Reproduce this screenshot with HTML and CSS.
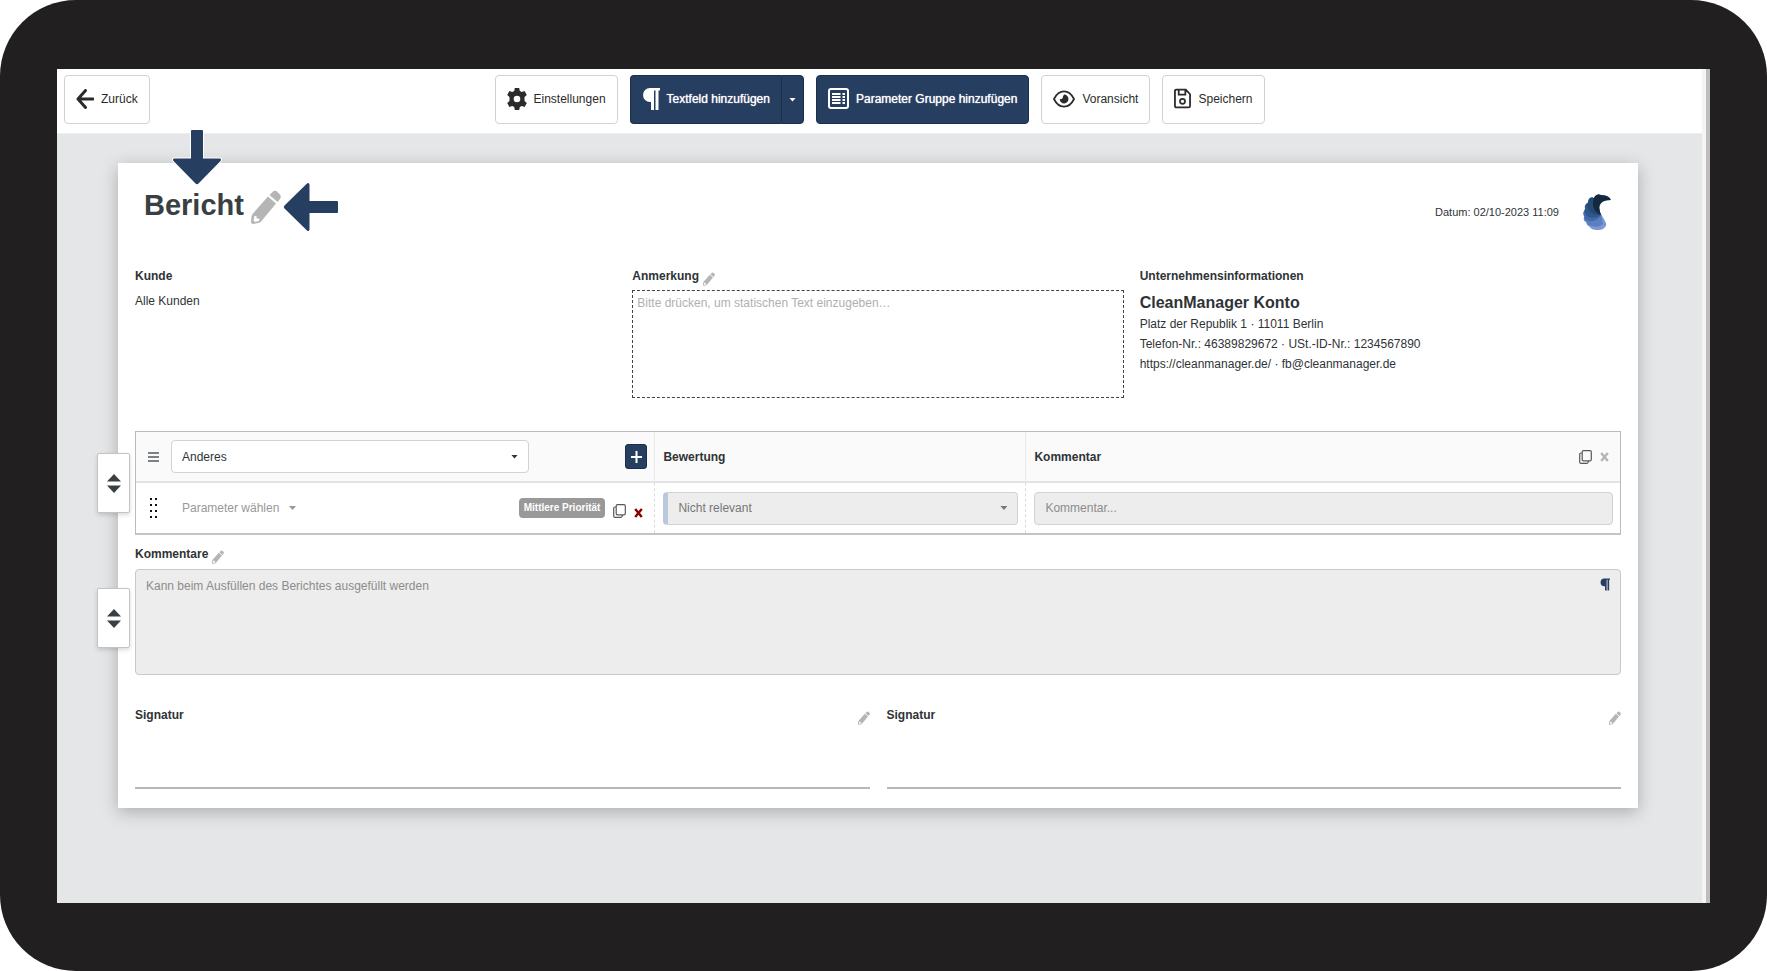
FILE: index.html
```
<!DOCTYPE html>
<html lang="de">
    <head>
        <meta charset="utf-8">
        <title>Bericht</title>
        <link rel="stylesheet" href="styles.css">
    </head>
    <body>
        <!-- shared icons -->
        <svg class="sprite" width="0" height="0" aria-hidden="true">
            <symbol id="pencil" viewBox="0 0 30 34">
                <path d="M21 2.500 Q23.500 -0.500 26.500 2 L28.500 4 Q31 6.500 28.500 9.500 L26.500 12 L18.500 5Z"/>
                <path fill-rule="evenodd" d="M17 6.500 L25 13.500 L10.500 31 Q9.500 32.500 7.500 33 L2 34 Q0 34 0 32 L0.500 26.500 Q0.800 25 2 23.500Z M3.500 26 L2.500 30.500 L4 32 L8 31 L8.500 28.500 L5.500 28.500 L5.500 26Z"/>
            </symbol>
            <symbol id="pilcrow" viewBox="0 0 18 22">
                <path d="M8 0 H18 V2.500 H16.500 V22 H13.500 V2.500 H12 V22 H9 V14 H8 A7 7 0 0 1 8 0Z"/>
            </symbol>
            <symbol id="copy" viewBox="0 0 13 14">
                <path d="M4.500 0.700 H11 Q12.300 0.700 12.300 2 V9.500 Q12.300 10.800 11 10.800 H4.500 Q3.200 10.800 3.200 9.500 V2 Q3.200 0.700 4.500 0.700Z M3.200 3 H2 Q0.700 3 0.700 4.300 V12 Q0.700 13.300 2 13.300 H8 Q9.300 13.300 9.500 10.800" fill="none" stroke="currentColor" stroke-width="1.200"/>
            </symbol>
            <symbol id="cross" viewBox="0 0 9 10">
                <path d="M1.200 1 L7.800 9 M7.800 1 L1.200 9" fill="none" stroke="currentColor" stroke-width="2.400"/>
            </symbol>
            <symbol id="updown" viewBox="0 0 14 19">
                <path d="M7 0 L14 7.500 H0Z M0 11.500 H14 L7 19Z"/>
            </symbol>
        </svg>

        <div class="device">
            <div class="screen">
                <header class="toolbar">
                    <div>
                        <button class="btn" type="button">
                            <svg width="18" height="20" viewBox="0 0 18 20"><path d="M9.500 1.500 L2 10 L9.500 18.500 M2 10 H17" fill="none" stroke="currentColor" stroke-width="3" stroke-linecap="round" stroke-linejoin="round"/></svg>
                            Zurück
                        </button>
                    </div>
                    <div class="toolbar-actions">
                        <button class="btn" type="button">
                            <svg width="20" height="22" viewBox="0 0 20 22"><path fill-rule="evenodd" d="M7.800 0 H12.200 L12.800 3 L14.800 4.100 L17.600 3.100 L19.800 7 L17.500 9 V13 L19.800 15 L17.600 18.900 L14.800 17.900 L12.800 19 L12.200 22 H7.800 L7.200 19 L5.200 17.900 L2.400 18.900 L0.200 15 L2.500 13 V9 L0.200 7 L2.400 3.100 L5.200 4.100 L7.200 3Z M10 7.700 A3.300 3.300 0 1 0 10 14.300 A3.300 3.300 0 1 0 10 7.700Z"/></svg>
                            Einstellungen
                        </button>
                        <div class="btn-group">
                            <button class="btn btn-primary" type="button">
                                <svg width="18" height="22"><use href="#pilcrow"/></svg>
                                Textfeld hinzufügen
                            </button>
                            <button class="btn btn-primary btn-caret" type="button" aria-label="Weitere Optionen"><span class="caret"></span></button>
                        </div>
                        <button class="btn btn-primary" type="button">
                            <svg width="21" height="21" viewBox="0 0 21 21"><rect x="1" y="1" width="19" height="19" rx="2" fill="none" stroke="currentColor" stroke-width="2"/><path d="M4 6 H12.500 M4 9 H12.500 M4 12 H12.500 M4 15 H12.500 M14.500 6 H17 M14.500 9 H17 M14.500 12 H17 M14.500 15 H17" stroke="currentColor" stroke-width="1.800"/></svg>
                            Parameter Gruppe hinzufügen
                        </button>
                        <button class="btn" type="button">
                            <svg width="22" height="18" viewBox="0 0 23 18"><path d="M1 9 Q5 1 11.500 1 Q18 1 22 9 Q18 17 11.500 17 Q5 17 1 9Z" fill="none" stroke="currentColor" stroke-width="1.800" stroke-linejoin="round"/><path d="M11.500 4.400 A4.600 4.600 0 1 1 7 9.200 Q9.300 9.200 10 8.200 Q10.300 6 11.500 4.400Z"/></svg>
                            Voransicht
                        </button>
                        <button class="btn" type="button">
                            <svg width="17" height="21" viewBox="0 0 18 21"><path d="M2.500 1 H12.500 L17 6 V18.500 Q17 20 15.500 20 H2.500 Q1 20 1 18.500 V2.500 Q1 1 2.500 1Z M5 1 V6.500 H12 V1" fill="none" stroke="currentColor" stroke-width="1.900"/><circle cx="9" cy="13.500" r="2.700" fill="none" stroke="currentColor" stroke-width="1.800"/></svg>
                            Speichern
                        </button>
                    </div>
                </header>

                <main class="workspace">
                    <div class="sheet">
                        <div class="sheet-head">
                            <div class="title">
                                <h1>Bericht</h1>
                                <button class="icon-btn pencil" type="button" aria-label="Titel bearbeiten"><svg width="30" height="34"><use href="#pencil"/></svg></button>
                                <svg class="arrow arrow-down" width="50" height="57" viewBox="0 0 50 57"><path d="M20 1 H30 Q31 1 31 2 V29.500 H47.500 Q50 30 48.500 32 L26.500 54.500 Q25 56 23.500 54.500 L1.500 32 Q0 30 2.500 29.500 H19 V2 Q19 1 20 1Z"/></svg>
                                <svg class="arrow arrow-left" width="57" height="50" viewBox="0 0 57 50"><path d="M56 20 V30 Q56 31 55 31 H27.500 V47.500 Q27 50 25 48.500 L2.500 26.500 Q1 25 2.500 23.500 L25 1.500 Q27 0 27.500 2.500 V19 H55 Q56 19 56 20Z"/></svg>
                            </div>
                            <div class="meta">
                                <span>Datum: 02/10-2023 11:09</span>
                                <svg width="28" height="37" viewBox="0 0 28 37">
                                    <path d="M4 28 Q3 31 6 32 Q8 36 14 36 Q20 36.500 22 33 Q24.500 31 22 27 L18 20 L8 22Z" fill="#7b98d3"/>
                                    <path d="M1 23 Q0 27 3 28 Q4 32 9 32 Q16 34 20 30 L18 20 L8 18Z" fill="#5b7fc0"/>
                                    <path d="M2 15 Q-1 19 1 22 Q2 27 7 27 Q14 28 18 21 L12 12Z" fill="#416ba6"/>
                                    <path d="M4 9 Q1 11 2 15 Q1 21 6 23 Q13 25 18 21 L14 9Z" fill="#30568b"/>
                                    <path d="M9 3 Q5 4 5 8 Q3 12 6 16 Q9 21 18 21 Q14 14 18 8Z" fill="#244a74"/>
                                    <path d="M12 2 Q15 -1 18 1 Q26 1 28 6 Q18 6 16.500 12 Q16 16 18 21 Q9 17 10 8 Q10 4 12 2Z" fill="#14283f"/>
                                </svg>
                            </div>
                        </div>

                        <div class="info">
                            <section>
                                <h2>Kunde</h2>
                                <p class="customer">Alle Kunden</p>
                            </section>
                            <section class="note">
                                <div class="label-row">
                                    <label for="note">Anmerkung</label>
                                    <button class="icon-btn pencil" type="button" aria-label="Anmerkung bearbeiten"><svg width="12" height="14"><use href="#pencil"/></svg></button>
                                </div>
                                <textarea id="note" placeholder="Bitte drücken, um statischen Text einzugeben…"></textarea>
                            </section>
                            <section>
                                <h2>Unternehmensinformationen</h2>
                                <h3>CleanManager Konto</h3>
                                <p>Platz der Republik 1 · 11011 Berlin</p>
                                <p>Telefon-Nr.: 46389829672 · USt.-ID-Nr.: 1234567890</p>
                                <p>https://cleanmanager.de/ · fb@cleanmanager.de</p>
                            </section>
                        </div>

                        <section class="block">
                            <button class="handle" type="button" aria-label="Parametergruppe verschieben"><svg width="14" height="19"><use href="#updown"/></svg></button>
                            <table class="params">
                                <thead>
                                    <tr>
                                        <th>
                                            <div class="cell">
                                                <svg class="grip" width="11" height="10" viewBox="0 0 11 10"><path d="M0 1 H11 M0 5 H11 M0 9 H11" stroke="#55595c" stroke-width="1.600"/></svg>
                                                <div class="select group-select">
                                                    <select aria-label="Parametergruppe"><option>Anderes</option></select>
                                                    <span class="caret"></span>
                                                </div>
                                                <button class="add" type="button" aria-label="Parameter hinzufügen"><svg width="11" height="12" viewBox="0 0 11 12"><path d="M5.500 0 V12 M0 6 H11" stroke="currentColor" stroke-width="2"/></svg></button>
                                            </div>
                                        </th>
                                        <th>Bewertung</th>
                                        <th>
                                            <div class="cell">
                                                Kommentar
                                                <span class="cell-tools">
                                                    <button class="icon-btn" type="button" aria-label="Gruppe kopieren"><svg width="13" height="14"><use href="#copy"/></svg></button>
                                                    <button class="icon-btn muted" type="button" aria-label="Gruppe entfernen"><svg width="9" height="10"><use href="#cross"/></svg></button>
                                                </span>
                                            </div>
                                        </th>
                                    </tr>
                                </thead>
                                <tbody>
                                    <tr>
                                        <td>
                                            <div class="cell">
                                                <svg class="grip" width="11" height="20" viewBox="0 0 11 20"><path d="M2 0h2v2h-2z M7 0h2v2h-2z M2 6h2v2h-2z M7 6h2v2h-2z M2 12h2v2h-2z M7 12h2v2h-2z M2 18h2v2h-2z M7 18h2v2h-2z" fill="#111"/></svg>
                                                <div class="select plain-select">
                                                    <select aria-label="Parameter"><option>Parameter wählen</option></select>
                                                    <span class="caret"></span>
                                                </div>
                                                <span class="cell-tools">
                                                    <span class="badge">Mittlere Priorität</span>
                                                    <button class="icon-btn" type="button" aria-label="Parameter kopieren"><svg width="13" height="14"><use href="#copy"/></svg></button>
                                                    <button class="icon-btn danger" type="button" aria-label="Parameter entfernen"><svg width="9" height="10"><use href="#cross"/></svg></button>
                                                </span>
                                            </div>
                                        </td>
                                        <td>
                                            <div class="select rating-select">
                                                <select aria-label="Bewertung"><option>Nicht relevant</option></select>
                                                <span class="caret"></span>
                                            </div>
                                        </td>
                                        <td><input class="comment" type="text" aria-label="Kommentar" placeholder="Kommentar..."></td>
                                    </tr>
                                </tbody>
                            </table>
                        </section>

                        <section class="block comments">
                            <button class="handle handle-text" type="button" aria-label="Textfeld verschieben"><svg width="14" height="19"><use href="#updown"/></svg></button>
                            <div class="label-row">
                                <label for="comments">Kommentare</label>
                                <button class="icon-btn pencil" type="button" aria-label="Kommentare bearbeiten"><svg width="12" height="14"><use href="#pencil"/></svg></button>
                            </div>
                            <div class="comments-box">
                                <textarea id="comments" placeholder="Kann beim Ausfüllen des Berichtes ausgefüllt werden"></textarea>
                                <svg class="mark" width="10" height="13"><use href="#pilcrow"/></svg>
                            </div>
                        </section>

                        <div class="signatures">
                            <section class="signature">
                                <h2>Signatur</h2>
                                <button class="icon-btn pencil" type="button" aria-label="Signatur bearbeiten"><svg width="12" height="14"><use href="#pencil"/></svg></button>
                            </section>
                            <section class="signature">
                                <h2>Signatur</h2>
                                <button class="icon-btn pencil" type="button" aria-label="Signatur bearbeiten"><svg width="12" height="14"><use href="#pencil"/></svg></button>
                            </section>
                        </div>
                    </div>
                </main>
            </div>
        </div>
    </body>
</html>
```
FILE: styles.css
```
* {
    box-sizing: border-box;
}
body {
    margin: 0;
    background: #fff;
    color: #2f3336;
    font: 12px/20px "Liberation Sans", Arial, sans-serif;
}
h1, h2, h3, p {
    margin: 0;
}
h2, label {
    font-size: 12px;
    font-weight: bold;
    line-height: 20px;
}
button, select, input, textarea {
    font: inherit;
    color: inherit;
}
svg {
    display: block;
    flex: none;
    fill: currentColor;
}
.sprite {
    position: absolute;
}

/* tablet frame */
.device {
    display: flex;
    min-height: 100vh;
    padding: 69px 57px 68px;
    background: #221f20;
    border-radius: 76px;
}
.screen {
    flex: 1;
    display: flex;
    flex-direction: column;
    background: #e4e6e8;
    border-right: 4px solid #bdbdbd;
    box-shadow: inset -4px 0 #f4f4f4;
}

/* toolbar */
.toolbar {
    display: grid;
    grid-template-columns: 1fr auto 1fr;
    margin-right: 4px;
    padding: 6px 7px 9px;
    background: #fff;
    border-bottom: 1px solid #eee;
}
.toolbar-actions {
    display: flex;
    gap: 12px;
}
.btn {
    display: flex;
    align-items: center;
    gap: 7px;
    height: 49px;
    padding: 0 11px 2px;
    background: #fff;
    border: 1px solid #d0d2d3;
    border-radius: 4px;
    color: #2b2b2b;
    white-space: nowrap;
}
.btn-primary {
    background: #263e60;
    border-color: #1b2f4d;
    color: #fff;
    text-shadow: 0 0 1px #fff;
}
.btn-group {
    display: flex;
}
.btn-group .btn:first-child {
    border-radius: 4px 0 0 4px;
    border-right: 0;
}
.btn-group .btn-caret {
    padding: 0 7px;
    border-radius: 0 4px 4px 0;
}
.caret {
    width: 7px;
    height: 4px;
    background: currentColor;
    clip-path: polygon(0 0, 100% 0, 50% 100%);
}

/* report sheet */
.workspace {
    padding: 29px 68px 0 61px;
}
.sheet {
    padding: 18px 17px 19px;
    background: #fff;
    box-shadow: 0 4px 16px rgba(0, 0, 0, 0.25);
}
.sheet-head {
    display: flex;
    justify-content: space-between;
    height: 60px;
    margin-bottom: 25px;
    padding-left: 9px;
}
.title {
    position: relative;
    display: flex;
    gap: 7px;
    height: 48px;
    align-items: center;
}
h1 {
    font-size: 29px;
    line-height: 48px;
    color: #3a3f43;
}
.icon-btn {
    padding: 0;
    background: none;
    border: 0;
    color: #55595c;
}
.pencil {
    color: #b5b5b5;
}
.title .pencil {
    padding-top: 4px;
}
.arrow {
    position: absolute;
    fill: #263e60;
    stroke: #fff;
    stroke-width: 2px;
    paint-order: stroke;
    overflow: visible;
}
.arrow-down {
    left: 28px;
    top: -52px;
}
.arrow-left {
    left: 138px;
    top: 1px;
}
.meta {
    display: flex;
    align-items: center;
    gap: 24px;
    padding: 2px 10px 0 0;
    height: 60px;
    font-size: 11px;
}
.info {
    display: grid;
    grid-template-columns: 482fr 492fr 482fr;
    gap: 16px;
    margin-bottom: 33px;
}
.customer {
    padding-top: 5px;
}
.info h3 {
    padding-top: 6px;
    font-size: 16px;
    line-height: 22px;
}
.label-row {
    display: flex;
    align-items: flex-end;
    gap: 4px;
    height: 20px;
}
textarea {
    display: block;
    width: 100%;
    resize: none;
}
.note textarea {
    height: 108px;
    margin-top: 4px;
    padding: 2px 4px;
    background: #fff;
    border: 1px dashed #444;
}
.note textarea::placeholder {
    color: #b0b0b0;
}

/* movable blocks */
.block {
    position: relative;
}
.handle {
    position: absolute;
    left: -38px;
    top: 22px;
    display: flex;
    align-items: center;
    justify-content: center;
    width: 33px;
    height: 60px;
    padding: 0;
    background: #fff;
    border: 1px solid #c4c4c4;
    border-radius: 2px;
    box-shadow: 0 2px 4px rgba(0, 0, 0, 0.15);
    color: #3a3f43;
}
.handle-text {
    top: 44px;
}

/* parameter table */
.params {
    width: 100%;
    table-layout: fixed;
    border-collapse: separate;
    border-spacing: 0;
    border: 1px solid #bbb;
    border-bottom: 2px solid #c4c4c4;
}
.params th, .params td {
    height: 50px;
    padding: 0 7px 0 8px;
    text-align: left;
}
.params th {
    height: 51px;
    background: #fafafa;
    border-right: 1px solid #e8e8e8;
    border-bottom: 2px solid #e2e3e3;
}
.params td {
    border-right: 1px dashed #ddd;
}
.params th:last-child, .params td:last-child {
    width: 40%;
    border-right: 0;
}
.params th:first-child {
    width: 35%;
}
.cell {
    display: flex;
    align-items: center;
}
.grip {
    margin: 0 12px 0 4px;
}
.cell-tools {
    display: flex;
    align-items: center;
    gap: 8px;
    margin-left: auto;
    padding-right: 4px;
}
.params td .cell-tools {
    align-items: flex-end;
}
.select {
    display: grid;
    align-items: center;
    font-weight: normal;
}
.select select {
    grid-area: 1 / 1;
    width: 100%;
    height: 33px;
    padding: 0 26px 0 10px;
    appearance: none;
    background: #fff;
    border: 1px solid #d0d2d3;
    border-radius: 4px;
}
.select .caret {
    grid-area: 1 / 1;
    justify-self: end;
    margin-right: 11px;
    pointer-events: none;
}
.group-select {
    width: 358px;
}
.plain-select {
    color: #999;
}
.plain-select select {
    border-color: transparent;
}
.rating-select {
    color: #777;
}
.rating-select select {
    background: #ededed;
    border-left: 5px solid #b9c8df;
}
.add {
    display: flex;
    align-items: center;
    justify-content: center;
    width: 22px;
    height: 25px;
    margin-left: auto;
    padding: 0;
    background: #263e60;
    border: 1px solid #1b2f4d;
    border-radius: 3px;
    color: #fff;
}
.badge {
    padding: 0 5px;
    background: #999;
    border-radius: 4px;
    color: #fff;
    font-size: 10px;
    font-weight: bold;
}
.muted {
    color: #b5b5b5;
}
.danger {
    color: #8b0000;
}
.comment {
    display: block;
    width: 100%;
    height: 33px;
    padding: 0 10px;
    background: #ededed;
    border: 1px solid #d0d2d3;
    border-radius: 4px;
}
.comment::placeholder, .comments textarea::placeholder {
    color: #8c8c8c;
}

/* comments */
.comments {
    margin-top: 9px;
}
.comments-box {
    position: relative;
    margin-top: 5px;
}
.comments textarea {
    height: 106px;
    padding: 6px 10px;
    background: #ededed;
    border: 1px solid #c8c8c8;
    border-radius: 4px;
}
.mark {
    position: absolute;
    top: 9px;
    right: 11px;
    color: #263e60;
}

/* signatures */
.signatures {
    display: grid;
    grid-template-columns: 1fr 1fr;
    gap: 17px;
    margin-top: 30px;
}
.signature {
    display: flex;
    justify-content: space-between;
    align-items: flex-start;
    height: 84px;
    border-bottom: 2px solid #b8b8b8;
}
.signature .pencil {
    padding-top: 6px;
}
```
